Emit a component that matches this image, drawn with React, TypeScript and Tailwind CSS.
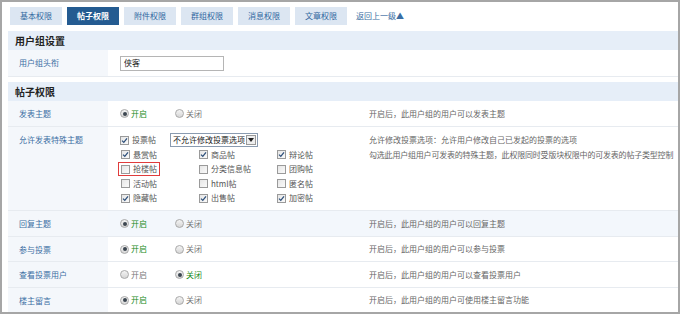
import React from "react"

const font = { fontFamily: '"Noto Sans CJK SC", "Noto Sans", sans-serif' }

const tabs = ["基本权限", "帖子权限", "附件权限", "群组权限", "消息权限", "文章权限"]

/* ---------------- ICONS ---------------- */

function Radio({ on }: { on?: boolean }) {
  return (
    <span className="inline-flex h-[9px] w-[9px] items-center justify-center rounded-full border border-[#a9a9a9] bg-gradient-to-b from-[#f4f4f4] to-[#d6d6d6]">
      {on && <span className="h-[4px] w-[4px] rounded-full bg-[#3c4650]" />}
    </span>
  )
}

function Check({ on }: { on?: boolean }) {
  return (
    <span className="inline-flex h-[9px] w-[9px] items-center justify-center border border-[#9a9a9a] bg-gradient-to-br from-[#e6e6e6] to-[#fafafa]">
      {on && (
        <svg width="7" height="7" viewBox="0 0 7 7">
          <path d="M1 3.6 L2.8 5.4 L6 1.4" fill="none" stroke="#2d4f7a" strokeWidth="1.3" />
        </svg>
      )}
    </span>
  )
}

/* ---------------- ROWS ---------------- */

function Header({ title }: { title: string }) {
  return (
    <div className="flex h-[19px] items-center bg-[#e6eef8] pl-[7px] text-[10px] font-bold text-[#222]">
      {title}
    </div>
  )
}

function Row({
  label,
  children,
  desc,
  h = "h-[26px]",
  hl,
}: {
  label: string
  children: React.ReactNode
  desc?: React.ReactNode
  h?: string
  hl?: boolean
}) {
  return (
    <div className={`flex border-b border-[#e7ebf0] ${h} ${hl ? "bg-[#f3f7fc]" : "bg-white"}`}>
      <div className="w-[100px] shrink-0 bg-[#f4f7fb] pl-[11px] pt-[7px] text-[8px] leading-[12px] text-[#3b6ea3]">
        {label}
      </div>
      <div className="w-[261px] shrink-0 pl-[12px]">{children}</div>
      <div className="min-w-0 flex-1 text-[8px] text-[#666]">{desc}</div>
    </div>
  )
}

function Toggle({ on }: { on: boolean }) {
  return (
    <div className="flex h-full items-center text-[8px]">
      <span className="flex w-[55px] items-center gap-[2px]">
        <Radio on={on} />
        <span className={on ? "text-[#178a17]" : "text-[#777]"}>开启</span>
      </span>
      <span className="flex items-center gap-[2px]">
        <Radio on={!on} />
        <span className={!on ? "text-[#178a17]" : "text-[#777]"}>关闭</span>
      </span>
    </div>
  )
}

function Desc({ text }: { text: string }) {
  return <div className="flex h-full items-center">{text}</div>
}

const special: [string, boolean, boolean?][] = [
  ["悬赏帖", true],
  ["商品帖", true],
  ["辩论帖", true],
  ["抢楼帖", false, true],
  ["分类信息帖", false],
  ["团购帖", false],
  ["活动帖", false],
  ["html帖", false],
  ["匿名帖", false],
  ["隐藏帖", true],
  ["出售帖", true],
  ["加密帖", true],
]

export default function App() {
  return (
    <div style={font} className="h-[314px] w-[680px] overflow-hidden border-2 border-[#a6a6a6] bg-white">
      {/* TABS */}
      <div className="ml-[8px] mt-[5px] flex h-[18px] items-center gap-[5px] text-[8px]">
        {tabs.map((t, i) => (
          <div
            key={t}
            className={`flex h-full w-[52px] items-center justify-center ${
              i === 1 ? "bg-[#245b91] font-bold text-white" : "bg-[#dce6f2] text-[#3066a0]"
            }`}
          >
            {t}
          </div>
        ))}
        <span className="ml-[4px] text-[#3b6ea3]">返回上一级▲</span>
      </div>

      <div className="ml-[6px] mt-[6px]">
        <Header title="用户组设置" />
        <Row label="用户组头衔" h="h-[27px]">
          <div className="flex h-full items-center">
            <div className="flex h-[15px] w-[104px] items-center border border-[#b5b5b5] pl-[3px] text-[8px] text-[#222]">
              侠客
            </div>
          </div>
        </Row>

        <div className="h-[5px]" />
        <Header title="帖子权限" />

        <Row label="发表主题" desc={<Desc text="开启后，此用户组的用户可以发表主题" />}>
          <Toggle on />
        </Row>

        <Row
          label="允许发表特殊主题"
          h="h-[84px]"
          desc={
            <div className="pt-[6px] leading-[14.5px]">
              <div>允许修改投票选项：允许用户修改自己已发起的投票的选项</div>
              <div className="whitespace-nowrap tracking-[-0.2px]">
                勾选此用户组用户可发表的特殊主题，此权限同时受版块权限中的可发表的帖子类型控制
              </div>
            </div>
          }
        >
          <div className="pt-[6px] text-[8px] leading-[14.5px] text-[#555]">
            <div className="flex h-[14.5px] items-center">
              <span className="flex w-[50px] items-center gap-[3px]">
                <Check on />
                投票帖
              </span>
              <span className="flex h-[14px] w-[88px] items-center justify-between border border-[#8a9bb0] bg-white pl-[2px] text-[#222]">
                不允许修改投票选项
                <span className="mr-[1px] flex h-[10px] w-[10px] items-center justify-center border border-[#999] bg-[#eee]">
                  <svg width="6" height="4" viewBox="0 0 6 4">
                    <path d="M0 0 H6 L3 4 Z" fill="#222" />
                  </svg>
                </span>
              </span>
            </div>
            <div className="grid grid-cols-[78px_78px_78px]">
              {special.map(([t, on, boxed]) => (
                <div key={t} className="flex h-[14.5px] items-center">
                  <span
                    className={`-ml-[2px] flex items-center gap-[3px] px-[2px] ${
                      boxed ? "h-[14px] w-[42px] border border-[#e03c3c]" : "border border-transparent"
                    }`}
                  >
                    <Check on={on} />
                    {t}
                  </span>
                </div>
              ))}
            </div>
          </div>
        </Row>

        <Row label="回复主题" hl desc={<Desc text="开启后，此用户组的用户可以回复主题" />}>
          <Toggle on />
        </Row>
        <Row label="参与投票" h="h-[25px]" desc={<Desc text="开启后，此用户组的用户可以参与投票" />}>
          <Toggle on />
        </Row>
        <Row label="查看投票用户" desc={<Desc text="开启后，此用户组的用户可以查看投票用户" />}>
          <Toggle on={false} />
        </Row>
        <Row label="楼主留言" h="h-[25px]" desc={<Desc text="开启后，此用户组的用户可使用楼主留言功能" />}>
          <Toggle on />
        </Row>
      </div>
    </div>
  )
}
